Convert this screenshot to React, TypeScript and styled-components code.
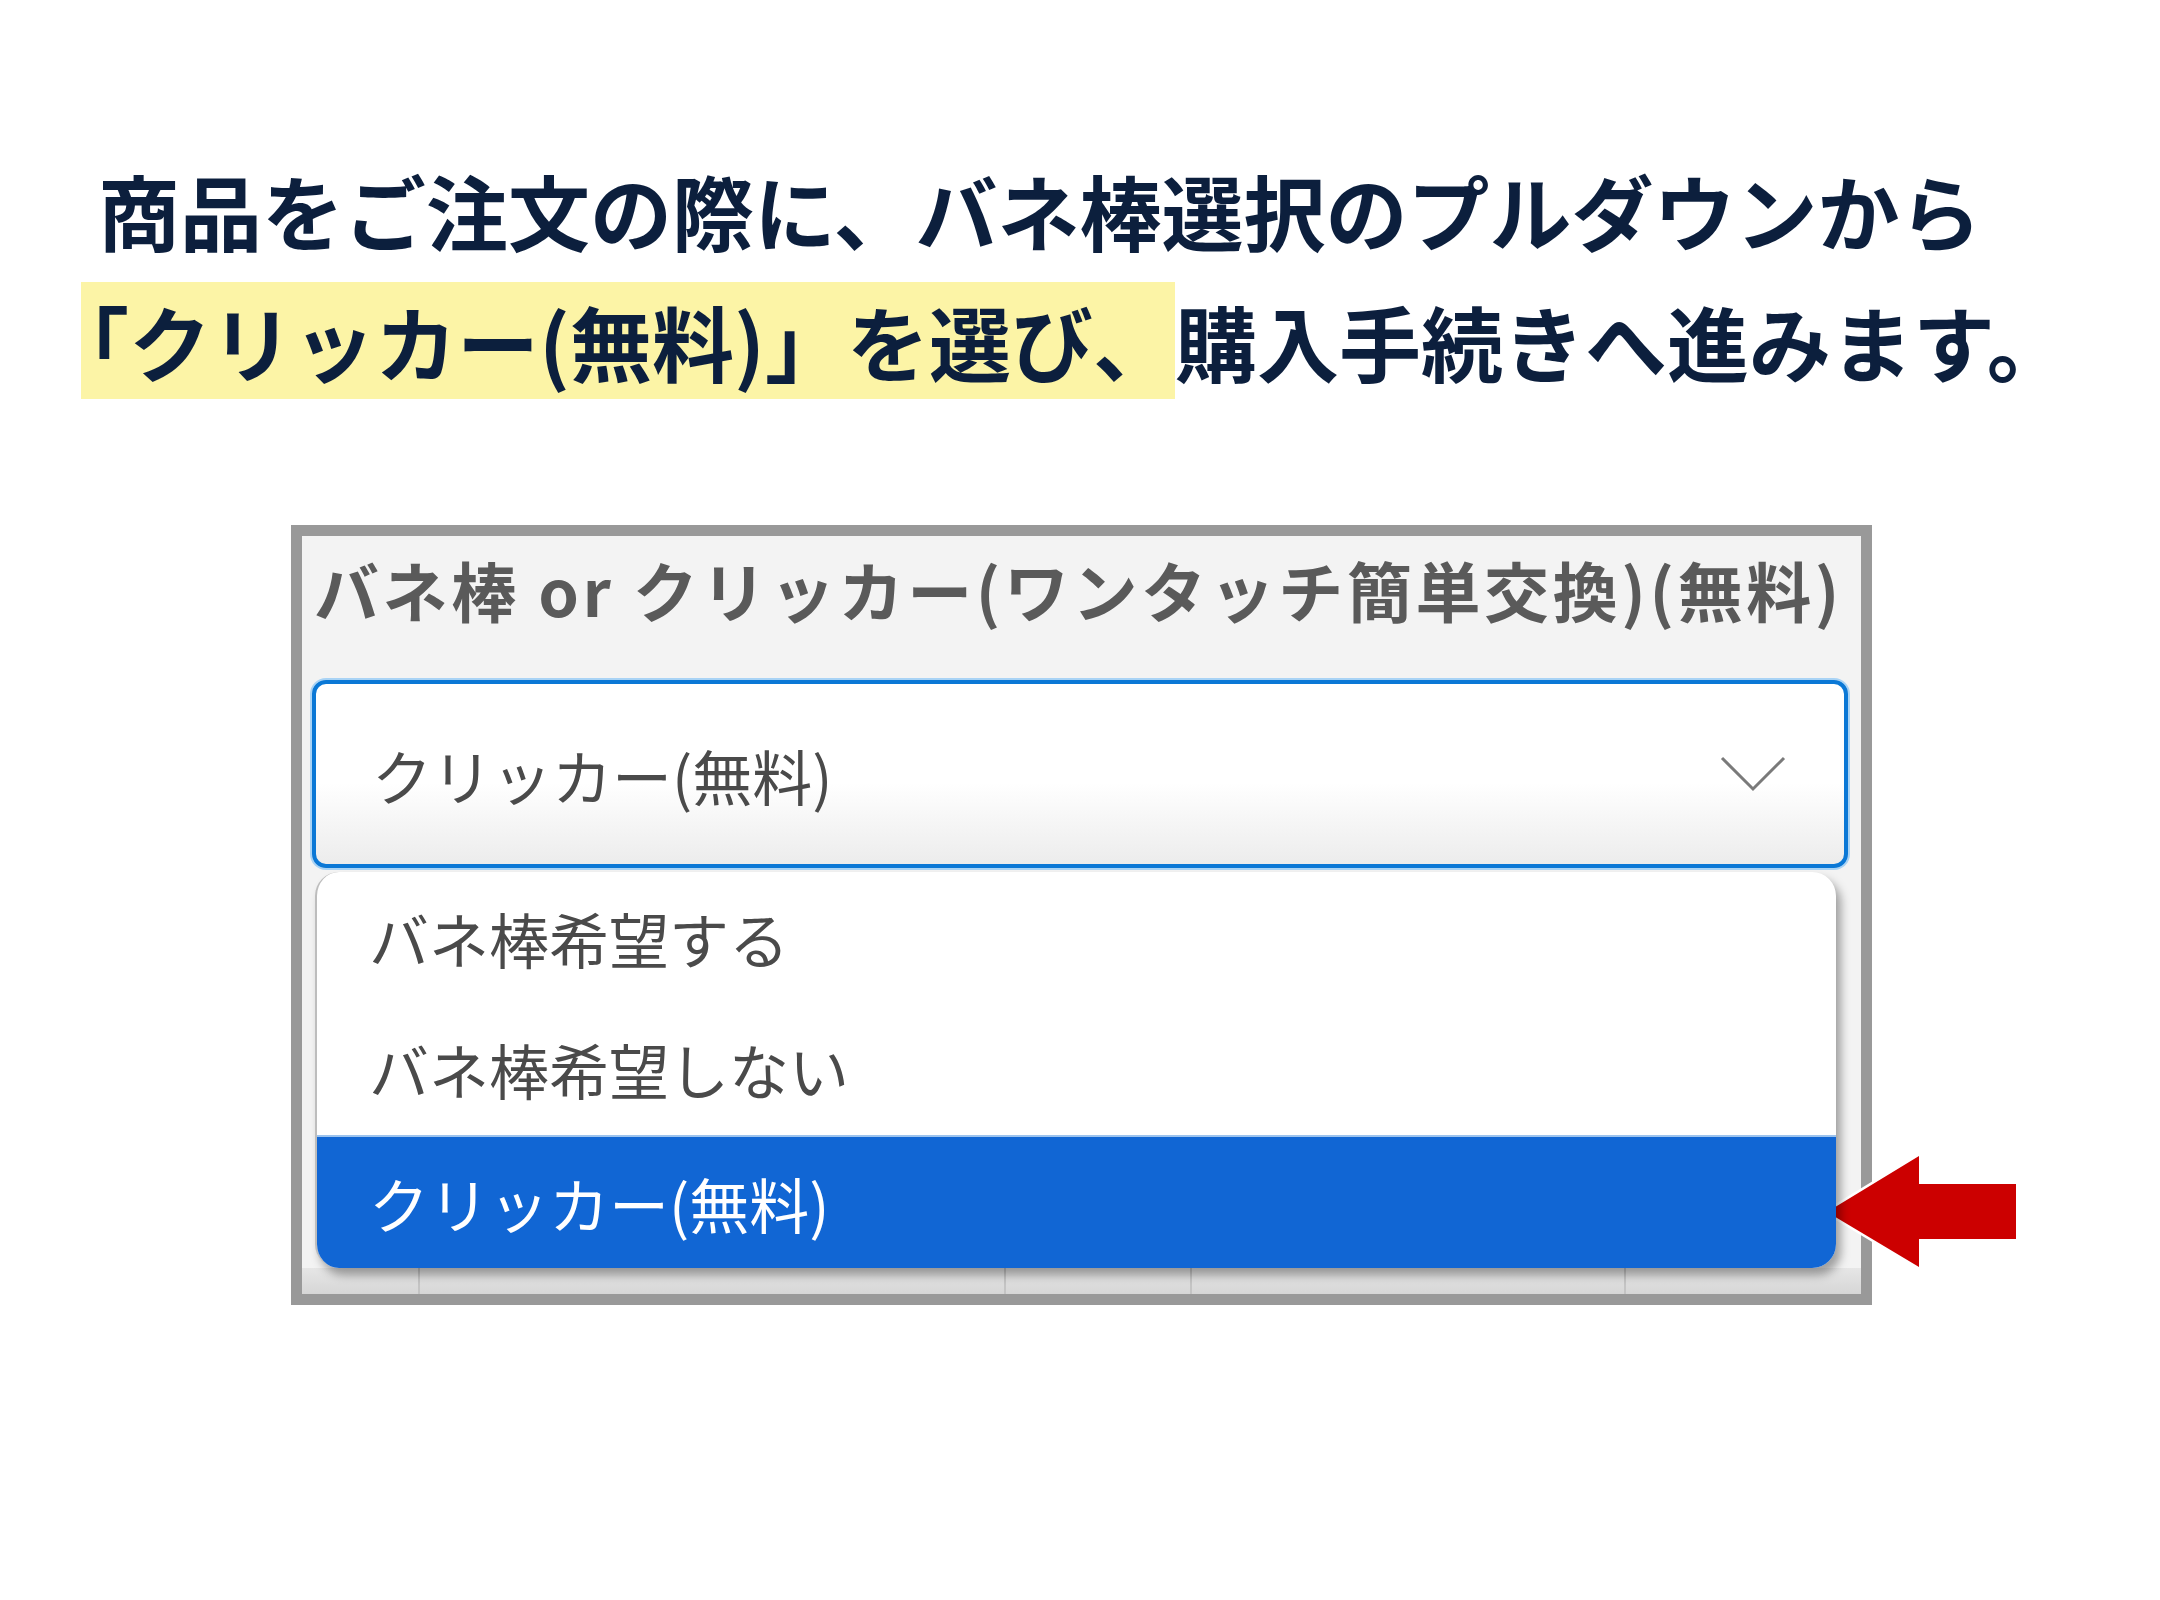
import styled, { createGlobalStyle } from 'styled-components';

const GlobalStyle = createGlobalStyle`
  html, body {
    margin: 0;
    padding: 0;
    background: #ffffff;
  }
`;

const Page = styled.div`
  width: 2160px;
  height: 1600px;
  overflow: hidden;
  background: #ffffff;
  font-family: 'Noto Sans CJK JP', 'Noto Sans', sans-serif;
`;

const Heading = styled.div`
  padding-top: 151px;
  color: #0c1f3d;
  font-size: 82px;
  font-weight: 700;
`;

const Line = styled.div<{ $indent: number }>`
  height: 117px;
  line-height: 117px;
  margin-bottom: 14px;
  padding-left: ${(p) => p.$indent}px;
  white-space: nowrap;
`;

const Mark = styled.span`
  display: inline-block;
  background: #fcf4a6;
`;

const Bracket = styled.span`
  margin-left: -34px;
`;

const FigureRow = styled.div`
  position: relative;
  margin-top: 126px;
  padding-left: 291px;
`;

const Frame = styled.div`
  box-sizing: border-box;
  width: 1581px;
  height: 780px;
  border: 11px solid #999999;
  background: #f3f3f3;
  padding-top: 13px;
  display: flex;
  flex-direction: column;
`;

const Label = styled.div`
  padding-left: 12px;
  height: 80px;
  line-height: 80px;
  font-size: 65px;
  font-weight: 700;
  color: #5a5a5a;
  white-space: nowrap;
  letter-spacing: 3.6px;
`;

const SelectBox = styled.div`
  box-sizing: border-box;
  margin: 51px 0 0 10px;
  width: 1536px;
  height: 188px;
  border: 4px solid #0b78d6;
  border-radius: 14px;
  box-shadow: 0 0 0 2px #a9d3f5;
  background: linear-gradient(#ffffff 55%, #ececec);
  display: flex;
  align-items: center;
  justify-content: space-between;
  padding: 0 58px 0 56px;
  font-size: 60px;
  color: #4a4a4a;
`;

const Chevron = () => (
  <svg width="66" height="36" viewBox="0 0 66 36">
    <polyline points="2,2 33,33 64,2" fill="none" stroke="#7a7a7a" strokeWidth="3" />
  </svg>
);

const List = styled.div`
  position: relative;
  z-index: 1;
  box-sizing: border-box;
  margin: 4px 0 0 13px;
  width: 1521px;
  height: 396px;
  background: #ffffff;
  border-left: 2px solid #bdbdbd;
  border-radius: 24px;
  box-shadow: 5px 7px 10px rgba(0, 0, 0, 0.35);
  overflow: hidden;
  display: flex;
  flex-direction: column;
`;

const Option = styled.div<{ $active?: boolean }>`
  flex: 1;
  display: flex;
  align-items: center;
  padding-left: 52px;
  font-size: 60px;
  color: ${(p) => (p.$active ? '#ffffff' : '#4a4a4a')};
  background: ${(p) => (p.$active ? '#1166d4' : 'transparent')};
  border-top: ${(p) => (p.$active ? '2px solid #9cc3ee' : 'none')};
`;

const Strip = styled.div`
  flex: 1;
  display: grid;
  grid-template-columns: 118px 586px 186px 434px 1fr;
  background: linear-gradient(#e6e6e6, #d6d6d6);
`;

const Cell = styled.div`
  border-right: 2px solid #c4c4c4;
  &:last-child {
    border-right: none;
  }
`;

const Arrow = styled.svg`
  position: absolute;
  left: 1822px;
  top: 625px;
`;

export default function App() {
  return (
    <Page>
      <GlobalStyle />
      <Heading>
        <Line $indent={98}>商品をご注文の際に、バネ棒選択のプルダウンから</Line>
        <Line $indent={81}>
          <Mark>
            <Bracket>「</Bracket>クリッカー(無料)」を選び、
          </Mark>
          購入手続きへ進みます。
        </Line>
      </Heading>
      <FigureRow>
        <Frame>
          <Label>バネ棒 or クリッカー(ワンタッチ簡単交換)(無料)</Label>
          <SelectBox>
            <span>クリッカー(無料)</span>
            <Chevron />
          </SelectBox>
          <List>
            <Option>バネ棒希望する</Option>
            <Option>バネ棒希望しない</Option>
            <Option $active>クリッカー(無料)</Option>
          </List>
          <Strip>
            <Cell />
            <Cell />
            <Cell />
            <Cell />
            <Cell />
          </Strip>
        </Frame>
        <Arrow width="196" height="124" viewBox="0 0 196 124">
          <polygon
            points="5,62 97,6 97,34 194,34 194,89 97,89 97,117"
            fill="#cc0000"
            stroke="#ffffff"
            strokeWidth="5"
            strokeLinejoin="miter"
            paintOrder="stroke"
          />
        </Arrow>
      </FigureRow>
    </Page>
  );
}
